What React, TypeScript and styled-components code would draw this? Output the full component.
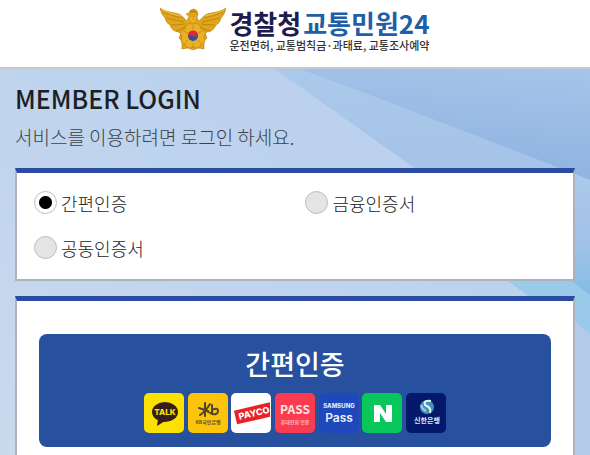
import React from 'react';
import styled, { createGlobalStyle } from 'styled-components';

const GlobalStyle = createGlobalStyle`
  * { box-sizing: border-box; }
  body {
    margin: 0;
    background: #c4d5ed;
    font-family: "Noto Sans CJK KR", "Noto Sans", sans-serif;
    color: #4a4a4a;
  }
`;

const Page = styled.div`
  min-height: 100vh;
  display: flex;
  flex-direction: column;
`;

const Header = styled.header`
  display: flex;
  justify-content: center;
  align-items: flex-start;
  gap: 3px;
  padding: 8px 0 15px;
  background: #fff;
  border-bottom: 2px solid #c5c9cf;
`;

const Emblem = styled.svg`
  width: 66px;
  height: 42px;
`;

const Brand = styled.a`
  display: flex;
  flex-direction: column;
  color: #1d1c4e;
  text-decoration: none;
  white-space: nowrap;
`;

const BrandName = styled.strong`
  font-size: 26px;
  line-height: 30px;
  font-weight: 700;
`;

const BrandService = styled.span`
  margin-left: 2px;
  color: #1f5fa8;
`;

const BrandCaption = styled.span`
  font-size: 11px;
  line-height: 14px;
  font-weight: 500;
  color: #333;
`;

const Main = styled.main`
  position: relative;
  z-index: 0;
  flex: 1;
  display: flex;
  flex-direction: column;
  padding: 12px 15px 0;
`;

const Backdrop = styled.svg`
  position: absolute;
  top: 0;
  left: 0;
  width: 100%;
  height: 100%;
  z-index: -1;
`;

const Title = styled.h1`
  margin: 0;
  font-size: 25px;
  line-height: 34px;
  font-weight: 500;
  color: #1c2024;
`;

const Lead = styled.p`
  margin: 6px 0 0;
  font-size: 19px;
  line-height: 32px;
  font-weight: 300;
  color: #3c4248;
`;

const Panel = styled.section`
  background: #fff;
  border: 2px solid #adb3bc;
  border-top: 5px solid #2b4ba3;
`;

const Methods = styled(Panel)`
  display: grid;
  grid-template-columns: 13fr 12fr;
  margin: 15px 0;
  padding: 7px 17px 9px;
`;

const Method = styled.label`
  display: flex;
  align-items: center;
  gap: 4px;
  height: 45px;
  font-size: 18px;
  font-weight: 300;
  color: #222;
`;

const Radio = styled.input`
  appearance: none;
  width: 23px;
  height: 23px;
  margin: 0;
  border: 1px solid #bdbdbd;
  border-radius: 50%;
  background: #e4e4e4;

  &:checked {
    background: radial-gradient(circle, #000 6px, #fff 7px);
  }
`;

const AuthPanel = styled(Panel)`
  flex: 1;
  padding: 33px 22px 8px;
  border-bottom: 0;
`;

const AuthButton = styled.button`
  display: flex;
  flex-direction: column;
  align-items: center;
  width: 100%;
  padding: 11px 12px 14px;
  border: 0;
  border-radius: 8px;
  background: #27509f;
  color: #fff;
  font-family: inherit;
`;

const AuthTitle = styled.span`
  font-size: 27px;
  line-height: 38px;
  font-weight: 500;
`;

const Providers = styled.span`
  display: flex;
  justify-content: space-between;
  width: 100%;
  max-width: 302px;
  margin-top: 10px;
`;

const ProviderIcon = styled.svg`
  width: 40px;
  height: 40px;
  font-family: "Noto Sans CJK KR", sans-serif;
  text-anchor: middle;
`;

const LatinMark = styled.text`
  font-family: Inter, sans-serif;
`;

function PoliceEmblem() {
  return (
    <Emblem viewBox="0 0 66 42" aria-hidden="true">
      <path
        d="M0 0C7 5 15 4 21 7L27 13 29 8 26 6 29 5Q30 1 34 1Q38 2 38 6L37 10 39 13 45 7C51 4 59 5 66 0Q65 6 61 10Q60 15 56 17Q53 24 47 24L45 25 47 30 44 33 44 41 38 40 33 42 28 40 22 41 22 33 19 30 21 25 18 24Q12 23 10 17Q6 15 5 10Q1 6 0 0Z"
        fill="#e0a51c" stroke="#b9800f" strokeWidth="0.6"
      />
      <path
        d="M3 4Q12 8 22 10M6 10Q15 12 24 14M11 17Q18 17 25 16M63 4Q54 8 44 10M60 10Q51 12 42 14M55 17Q48 17 41 16M16 23Q21 22 25 19M50 23Q45 22 41 19"
        fill="none" stroke="#b9800f" strokeWidth="0.8"
      />
      <path d="M2 2Q12 7 22 8M64 2Q54 7 44 8M30 9L33 14 36 9" fill="none" stroke="#f3c33a" />
      <path
        d="M33 16Q40 14 41 21Q48 22 44 29Q47 35 41 36Q39 42 33 39Q27 42 25 36Q19 35 22 29Q18 22 25 21Q26 14 33 16Z"
        fill="#eab127" stroke="#bd8513" strokeWidth="0.7"
      />
      <path
        d="M33 17V21M23 23L28 25M43 23L38 25M25 35L28 32M41 35L38 32M33 35V40"
        stroke="#c08a17" strokeWidth="0.8"
      />
      <path d="M30 4L34 3 36 5" fill="none" stroke="#8e620e" strokeWidth="0.8" />
      <circle cx="33" cy="28" r="5" fill="#27539b" />
      <path d="M28 28A5 5 0 0 1 38 27Q35 30 33 28T28 29Z" fill="#d8283b" />
    </Emblem>
  );
}

function BeamBackdrop() {
  return (
    <Backdrop viewBox="0 0 590 386" preserveAspectRatio="none" aria-hidden="true">
      <defs>
        <linearGradient id="base" x1="0" y1="1" x2="1" y2="0">
          <stop offset="0" stopColor="#c9daee" />
          <stop offset="1" stopColor="#b5cdec" />
        </linearGradient>
        <linearGradient id="beam" x1="0" y1="0" x2="0" y2="1">
          <stop offset="0" stopColor="#abc9e9" />
          <stop offset="0.55" stopColor="#a3c2e8" />
          <stop offset="1" stopColor="#83bde6" />
        </linearGradient>
        <linearGradient id="shade" x1="1" y1="0" x2="0.75" y2="1">
          <stop offset="0" stopColor="#a5c5e9" />
          <stop offset="1" stopColor="#8eb2e1" />
        </linearGradient>
      </defs>
      <rect width="590" height="386" fill="url(#base)" />
      <path d="M275 0H590V226L413 98Z" fill="url(#beam)" />
      <path d="M300 0H590V111L557 98 360 22Z" fill="url(#shade)" />
      <path d="M507 211L410 145 590 180V273Z" fill="#9acae9" />
      <path d="M575 105L590 111V226L570 211Z" fill="url(#beam)" />
      <path d="M575 252L590 266V386H575Z" fill="#b3cbe9" />
    </Backdrop>
  );
}

function KakaoIcon() {
  return (
    <ProviderIcon viewBox="0 0 40 40" role="img" aria-label="카카오톡">
      <rect width="40" height="40" rx="5" fill="#fae100" />
      <ellipse cx="21" cy="19" rx="13" ry="10" fill="#371d1e" />
      <path d="M14 26L13 33 21 28Z" fill="#371d1e" />
      <LatinMark x="21" y="22" fontSize="8" fontWeight="800" fill="#fae100">TALK</LatinMark>
    </ProviderIcon>
  );
}

function KbIcon() {
  return (
    <ProviderIcon viewBox="0 0 40 40" role="img" aria-label="KB국민은행">
      <rect width="40" height="40" rx="5" fill="#fdc509" />
      <path
        d="M11 15L20 18M17 10V23M12 22Q17 19 22 11M17 17L24 21M24 12V21M24 17Q30 14 30 18T24 21"
        fill="none" stroke="#51442f" strokeWidth="2" strokeLinecap="round"
      />
      <text x="20" y="31" fontSize="5" fontWeight="700" fill="#65502a">KB국민은행</text>
    </ProviderIcon>
  );
}

function PaycoIcon() {
  return (
    <ProviderIcon viewBox="0 0 40 40" role="img" aria-label="PAYCO">
      <defs>
        <clipPath id="paycoCard"><rect width="39" height="40" rx="5" /></clipPath>
      </defs>
      <rect width="40" height="40" rx="5" fill="#fff" />
      <g clipPath="url(#paycoCard)">
        <rect x="4" y="13" width="42" height="14" fill="#e82127" transform="rotate(-13 24 20)" />
      </g>
      <LatinMark x="23" y="23" fontSize="9" fontWeight="800" fill="#fff" transform="rotate(-13 24 20)">
        PAYCO
      </LatinMark>
    </ProviderIcon>
  );
}

function PassIcon() {
  return (
    <ProviderIcon viewBox="0 0 40 40" role="img" aria-label="PASS">
      <rect width="40" height="40" rx="5" fill="#fb3b50" />
      <text x="20" y="21" fontSize="12" fontWeight="700" fill="#ffe5e5">PASS</text>
      <text x="20" y="31" fontSize="5" fontWeight="700" fill="#ffb9bd">휴대전화 인증</text>
    </ProviderIcon>
  );
}

function SamsungIcon() {
  return (
    <ProviderIcon viewBox="0 0 40 40" role="img" aria-label="Samsung Pass">
      <rect width="40" height="40" rx="5" fill="#2048bd" />
      <LatinMark x="20" y="15" fontSize="6" fontWeight="800" fill="#dbe7fa">SAMSUNG</LatinMark>
      <LatinMark x="20" y="29" fontSize="12" fontWeight="600" fill="#eaf1ff">Pass</LatinMark>
    </ProviderIcon>
  );
}

function NaverIcon() {
  return (
    <ProviderIcon viewBox="0 0 40 40" role="img" aria-label="네이버">
      <rect width="40" height="40" rx="5" fill="#07c75a" />
      <path d="M12 12H18L24 21V12H30V29H24L18 20V29H12Z" fill="#fff" />
    </ProviderIcon>
  );
}

function ShinhanIcon() {
  return (
    <ProviderIcon viewBox="0 0 40 40" role="img" aria-label="신한은행">
      <rect width="40" height="40" rx="5" fill="#04196b" />
      <circle cx="21" cy="14" r="7" fill="#3f93bc" />
      <path d="M25 8Q17 7 19 12Q26 15 24 20" fill="none" stroke="#e4f1ea" strokeWidth="2" />
      <path d="M15 12Q16 16 20 18" fill="none" stroke="#9dd0df" strokeWidth="2" />
      <text x="21" y="30" fontSize="7" fontWeight="700" fill="#dce4f5">신한은행</text>
    </ProviderIcon>
  );
}

const methods = ['간편인증', '금융인증서', '공동인증서'];

export default function App() {
  return (
    <Page>
      <GlobalStyle />
      <Header>
        <PoliceEmblem />
        <Brand href="#">
          <BrandName>
            경찰청<BrandService>교통민원24</BrandService>
          </BrandName>
          <BrandCaption>운전면허, 교통범칙금·과태료, 교통조사예약</BrandCaption>
        </Brand>
      </Header>
      <Main>
        <BeamBackdrop />
        <Title>MEMBER LOGIN</Title>
        <Lead>서비스를 이용하려면 로그인 하세요.</Lead>
        <Methods role="radiogroup" aria-label="인증 방법">
          {methods.map((name, index) => (
            <Method key={name}>
              <Radio type="radio" name="method" value={name} defaultChecked={index === 0} />
              {name}
            </Method>
          ))}
        </Methods>
        <AuthPanel>
          <AuthButton type="button">
            <AuthTitle>간편인증</AuthTitle>
            <Providers>
              <KakaoIcon />
              <KbIcon />
              <PaycoIcon />
              <PassIcon />
              <SamsungIcon />
              <NaverIcon />
              <ShinhanIcon />
            </Providers>
          </AuthButton>
        </AuthPanel>
      </Main>
    </Page>
  );
}
